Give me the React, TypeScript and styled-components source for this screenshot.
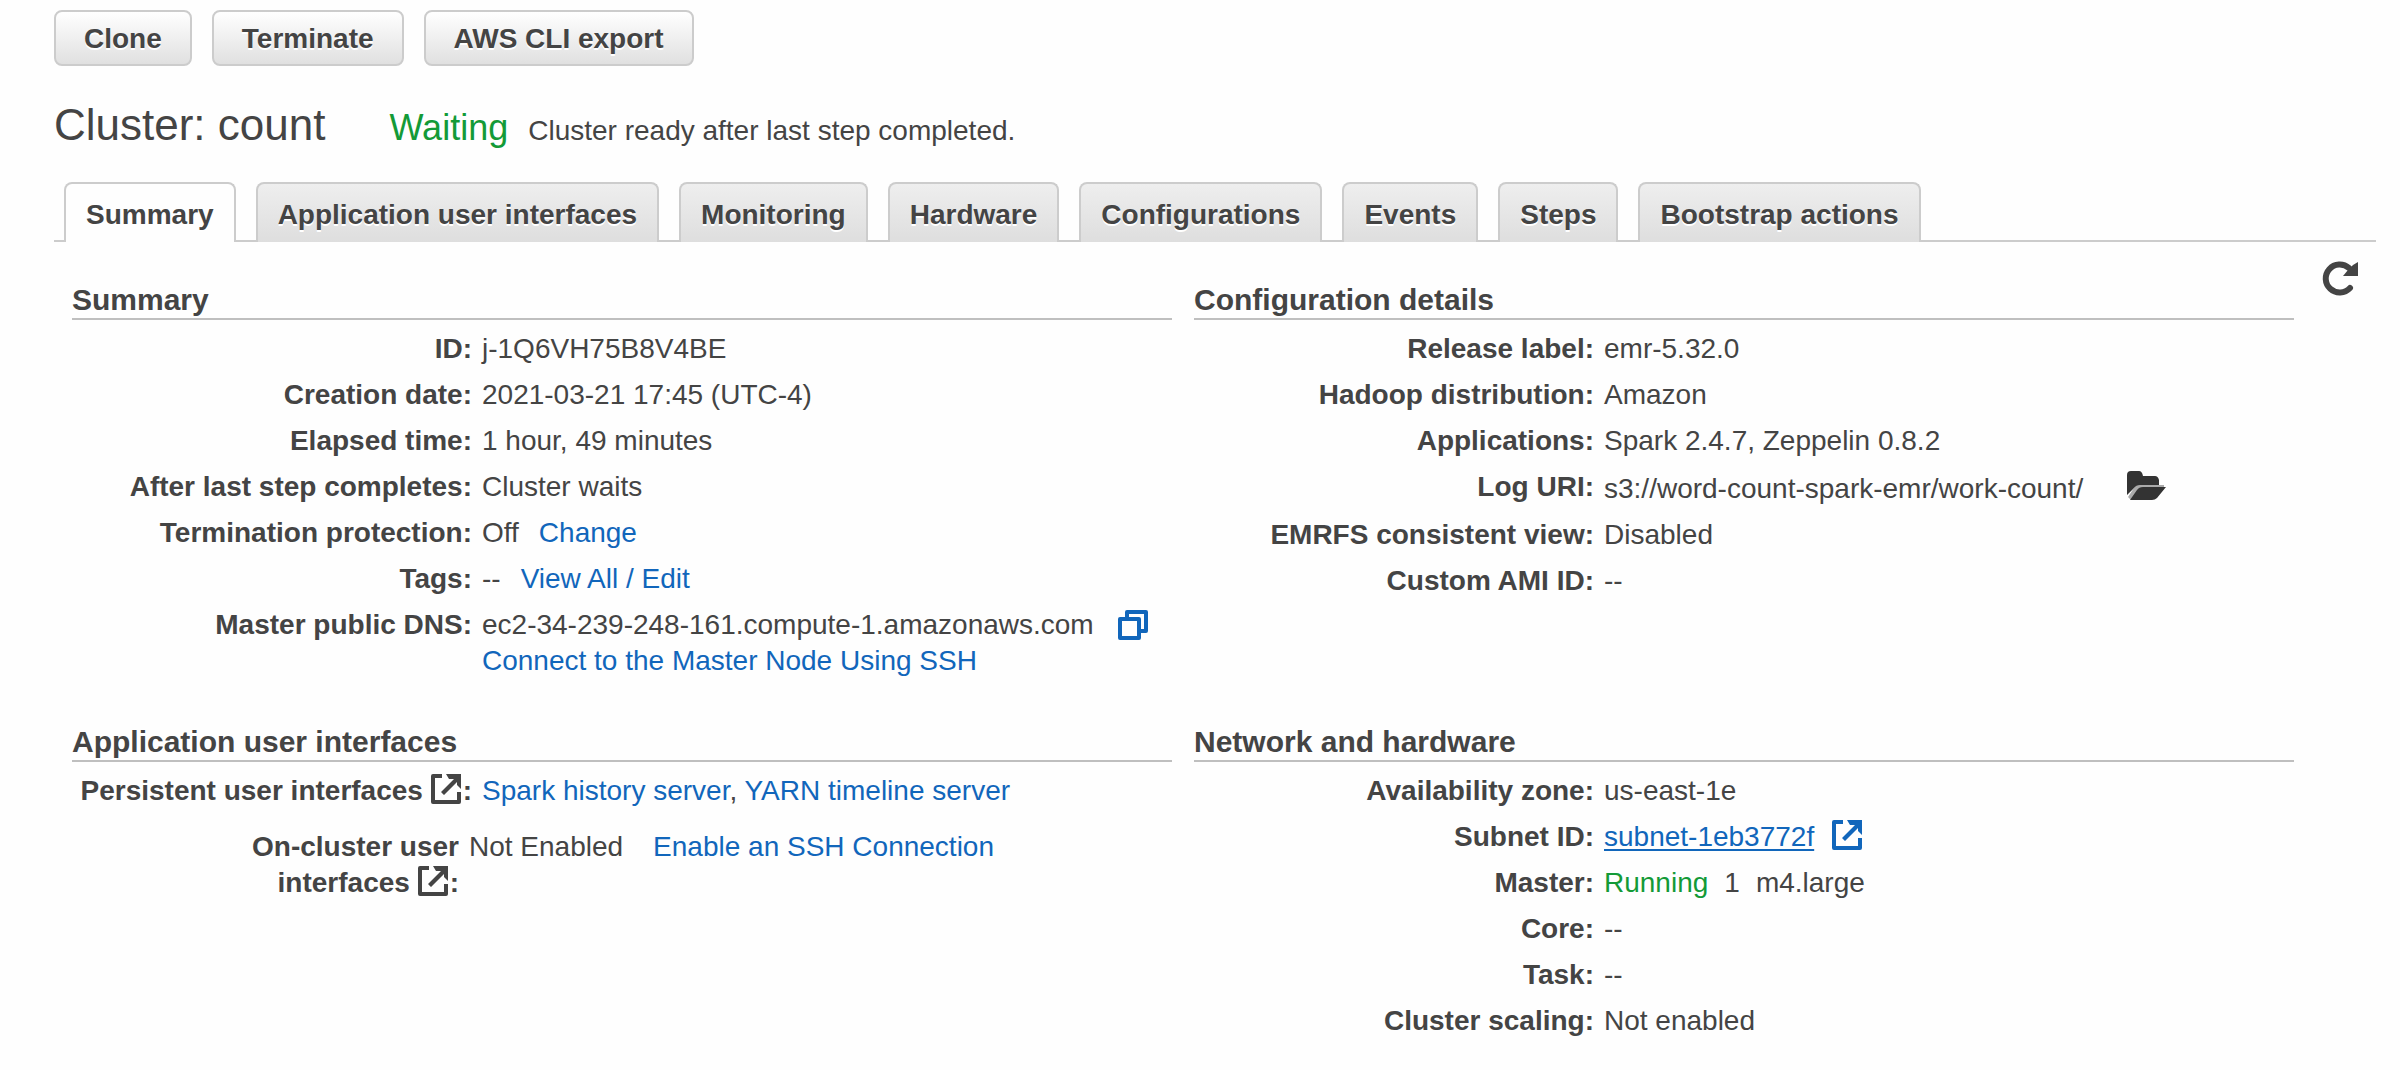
import React from "react";
import styled, { createGlobalStyle } from "styled-components";

const GlobalStyle = createGlobalStyle`
  * { box-sizing: border-box; }
  body {
    margin: 0;
    background: #fefefe;
    color: #444;
    font: 28px/36px "Liberation Sans", "Helvetica Neue", Arial, sans-serif;
  }
`;

const Page = styled.main`
  padding: 10px 24px 32px 54px;
`;

const Toolbar = styled.div`
  display: flex;
  gap: 20px;
`;

const Button = styled.button`
  height: 56px;
  padding: 2px 28px 0;
  border: 2px solid #ccc;
  border-radius: 8px;
  background: linear-gradient(#fff, #e0e0e0);
  color: #444;
  font: bold 28px/36px "Liberation Sans", "Helvetica Neue", Arial, sans-serif;
  text-shadow: 0 2px 0 #fff;
  cursor: pointer;
`;

const Header = styled.header`
  display: flex;
  align-items: baseline;
  margin: 33px 0 31px;
`;

const ClusterName = styled.h1`
  margin: 0 64px 0 0;
  font-size: 44px;
  line-height: 52px;
  font-weight: normal;
`;

const State = styled.span<{ $large?: boolean }>`
  margin-right: ${(p) => (p.$large ? 20 : 16)}px;
  color: #139a37;
  font-size: ${(p) => (p.$large ? 36 : 28)}px;
`;

const TabBar = styled.nav`
  display: flex;
  gap: 20px;
  padding-left: 10px;
  border-bottom: 2px solid #ccc;
`;

const Tab = styled.button<{ $active?: boolean }>`
  height: 60px;
  margin-bottom: -2px;
  padding: 4px 20px 0;
  border: 2px solid #ccc;
  border-bottom: 0;
  border-radius: 8px 8px 0 0;
  background: ${(p) => (p.$active ? "#fefefe" : "linear-gradient(#eee, #dedede)")};
  color: #444;
  font: bold 28px/36px "Liberation Sans", "Helvetica Neue", Arial, sans-serif;
  text-shadow: 0 2px 0 #fff;
  white-space: nowrap;
  cursor: pointer;
`;

const Panel = styled.div`
  display: flex;
  align-items: flex-start;
  justify-content: space-between;
  padding: 18px 18px 0;
`;

const Sections = styled.div`
  flex: 1;
  display: grid;
  grid-template-columns: 1fr 1fr;
  column-gap: 22px;
  row-gap: 45px;
  padding-top: 22px;
  margin-right: 28px;
`;

const SectionTitle = styled.h2`
  margin: 0;
  border-bottom: 2px solid #bfbfbf;
  font-size: 30px;
  line-height: 36px;
`;

const Details = styled.dl`
  margin: 0;
  padding-top: 1px;
`;

const Row = styled.div<{ $stacked?: boolean }>`
  display: grid;
  grid-template-columns: ${(p) => (p.$stacked ? "387px" : "400px")} 1fr;
  column-gap: 10px;
  padding-top: ${(p) => (p.$stacked ? 20 : 10)}px;
`;

const Term = styled.dt`
  font-weight: bold;
  text-align: right;

  svg {
    margin-right: 2px;
  }
`;

const Value = styled.dd<{ $lowered?: boolean }>`
  margin: 0;
  padding-top: ${(p) => (p.$lowered ? 2 : 0)}px;
`;

const Link = styled.a<{ $after?: number; $underlined?: boolean }>`
  margin-left: ${(p) => p.$after ?? 0}px;
  color: #1166bb;
  text-decoration: ${(p) => (p.$underlined ? "underline" : "none")};
  text-decoration-thickness: 2px;
  text-underline-offset: 3px;
`;

const Instances = styled.span`
  margin-right: 16px;
`;

const IconButton = styled.button<{ $after?: number; $link?: boolean }>`
  display: inline-flex;
  margin: 0 0 0 ${(p) => p.$after ?? 0}px;
  padding: 0;
  border: 0;
  background: none;
  color: ${(p) => (p.$link ? "#1166bb" : "#444")};
  vertical-align: top;
  cursor: pointer;
`;

const Glyph = styled.svg`
  display: inline-block;
  vertical-align: -4px;
`;

const ExternalIcon = () => (
  <Glyph width="30" height="30" viewBox="0 0 30 30">
    <path d="M11 2H2v26h26V18" fill="none" stroke="currentColor" strokeWidth="4" strokeLinejoin="round" />
    <path d="M15 0h15v15l-4-4V8L13 21l-3-3L23 5h-5z" fill="currentColor" />
  </Glyph>
);

const CopyIcon = () => (
  <Glyph width="30" height="36" viewBox="0 0 30 36" fill="none" stroke="currentColor" strokeWidth="4" strokeLinejoin="round">
    <path d="M2 12h19v19H2z" />
    <path d="M9 11V5h19v19h-6" />
  </Glyph>
);

const FolderIcon = () => (
  <Glyph width="40" height="32" viewBox="0 0 40 32">
    <path fill="#aaa" d="M1 26L9 14h28v3L12 20 4 29z" />
    <path fill="#333" d="M0 24V4q0-4 4-4h8q3 0 4 5h12q3 0 4 4v5H13q-4 0-6 3z" />
    <path fill="#333" d="M3 29l7-10q2-3 6-3h23l-9 11q-2 2-5 2z" />
  </Glyph>
);

const RefreshIcon = () => (
  <Glyph width="36" height="36" viewBox="0 0 36 36">
    <path fill="none" stroke="#444" strokeWidth="6" strokeLinecap="round" d="M28 28A14 14 0 1 1 27 8" />
    <path fill="#444" d="M36 2v14H21l5-6 5-5z" />
  </Glyph>
);

const tabs = [
  "Summary",
  "Application user interfaces",
  "Monitoring",
  "Hardware",
  "Configurations",
  "Events",
  "Steps",
  "Bootstrap actions",
];

type DetailProps = {
  label: React.ReactNode;
  children: React.ReactNode;
  stacked?: boolean;
  lowered?: boolean;
};

const Detail = ({ label, children, stacked, lowered }: DetailProps) => (
  <Row $stacked={stacked}>
    <Term>{label}:</Term>
    <Value $lowered={lowered}>{children}</Value>
  </Row>
);

export default function App() {
  return (
    <Page>
      <GlobalStyle />
      <Toolbar>
        <Button>Clone</Button>
        <Button>Terminate</Button>
        <Button>AWS CLI export</Button>
      </Toolbar>
      <Header>
        <ClusterName>Cluster: count</ClusterName>
        <State $large>Waiting</State>
        <span>Cluster ready after last step completed.</span>
      </Header>
      <TabBar>
        {tabs.map((tab, i) => (
          <Tab key={tab} $active={i === 0}>
            {tab}
          </Tab>
        ))}
      </TabBar>
      <Panel>
        <Sections>
          <section>
            <SectionTitle>Summary</SectionTitle>
            <Details>
              <Detail label="ID">j-1Q6VH75B8V4BE</Detail>
              <Detail label="Creation date">2021-03-21 17:45 (UTC-4)</Detail>
              <Detail label="Elapsed time">1 hour, 49 minutes</Detail>
              <Detail label="After last step completes">Cluster waits</Detail>
              <Detail label="Termination protection">
                Off<Link href="#change" $after={20}>Change</Link>
              </Detail>
              <Detail label="Tags">
                --<Link href="#tags" $after={20}>View All / Edit</Link>
              </Detail>
              <Detail label="Master public DNS">
                ec2-34-239-248-161.compute-1.amazonaws.com
                <IconButton $after={24} $link aria-label="Copy DNS name"><CopyIcon /></IconButton>
                <br />
                <Link href="#ssh">Connect to the Master Node Using SSH</Link>
              </Detail>
            </Details>
          </section>
          <section>
            <SectionTitle>Configuration details</SectionTitle>
            <Details>
              <Detail label="Release label">emr-5.32.0</Detail>
              <Detail label="Hadoop distribution">Amazon</Detail>
              <Detail label="Applications">Spark 2.4.7, Zeppelin 0.8.2</Detail>
              <Detail label="Log URI" lowered>
                s3://word-count-spark-emr/work-count/
                <IconButton $after={44} aria-label="Open log folder"><FolderIcon /></IconButton>
              </Detail>
              <Detail label="EMRFS consistent view">Disabled</Detail>
              <Detail label="Custom AMI ID">--</Detail>
            </Details>
          </section>
          <section>
            <SectionTitle>Application user interfaces</SectionTitle>
            <Details>
              <Detail label={<>Persistent user interfaces <ExternalIcon /></>}>
                <Link href="#spark">Spark history server</Link>, <Link href="#yarn">YARN timeline server</Link>
              </Detail>
              <Detail stacked label={<>On-cluster user<br />interfaces <ExternalIcon /></>}>
                Not Enabled<Link href="#enable-ssh" $after={30}>Enable an SSH Connection</Link>
              </Detail>
            </Details>
          </section>
          <section>
            <SectionTitle>Network and hardware</SectionTitle>
            <Details>
              <Detail label="Availability zone">us-east-1e</Detail>
              <Detail label="Subnet ID">
                <Link href="#subnet" $underlined>subnet-1eb3772f</Link>
                <Link href="#subnet" $after={18} aria-label="Open subnet"><ExternalIcon /></Link>
              </Detail>
              <Detail label="Master">
                <State>Running</State>
                <Instances>1</Instances>
                m4.large
              </Detail>
              <Detail label="Core">--</Detail>
              <Detail label="Task">--</Detail>
              <Detail label="Cluster scaling">Not enabled</Detail>
            </Details>
          </section>
        </Sections>
        <IconButton aria-label="Refresh"><RefreshIcon /></IconButton>
      </Panel>
    </Page>
  );
}
